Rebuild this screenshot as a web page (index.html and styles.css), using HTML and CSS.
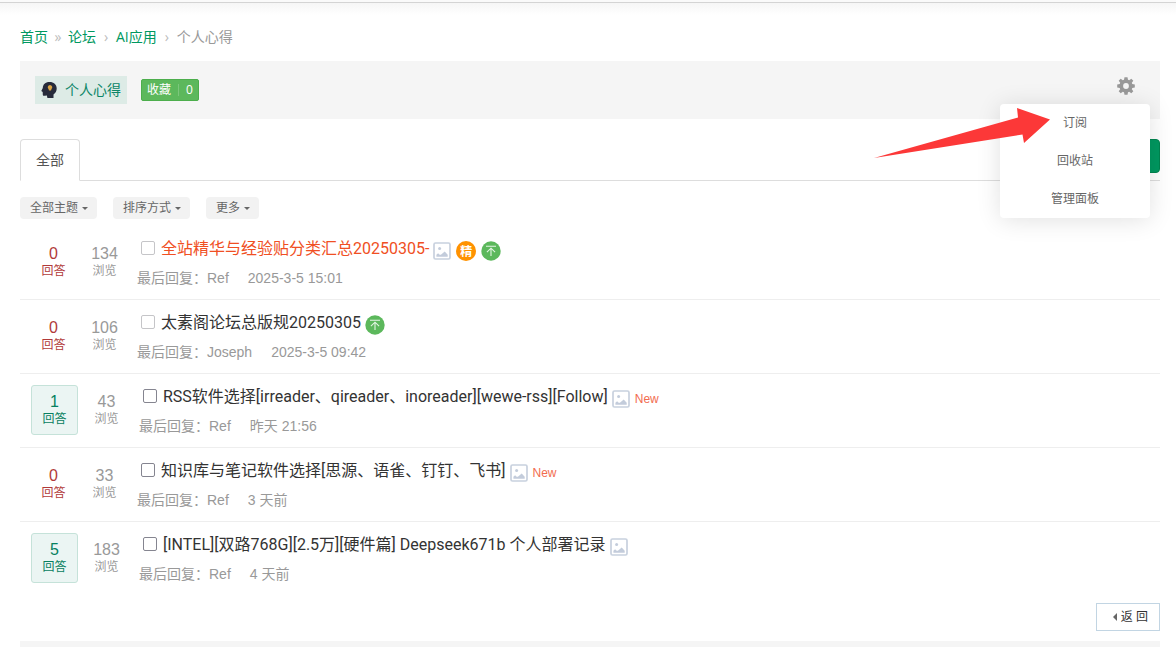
FILE: index.html
```html
<!DOCTYPE html>
<html lang="zh-CN">
<head>
<meta charset="utf-8">
<title>个人心得</title>
<link rel="stylesheet" href="styles.css">
</head>
<body>
<svg class="defs" aria-hidden="true">
  <symbol id="picture" viewBox="0 0 18 18">
    <rect x="1" y="1" width="16" height="16" rx="1.5" fill="none" stroke="#c8d1de" stroke-width="1.7"/>
    <circle cx="6.6" cy="6.6" r="1.5" fill="#c3ccdb"/>
    <path d="M3.4 14.8v-2l1.7-1.6 1.6 1.5h1.2l3.8-3.3 3 3.3v2.1z" fill="#c3ccdb"/>
  </symbol>
  <symbol id="pin" viewBox="0 0 20 20">
    <circle cx="10" cy="10" r="9.7" fill="#5cb85c"/>
    <path d="M5 5.3h10M10 15V7.3M5.9 11.2l4.1-4 4.1 4" fill="none" stroke="#e3f5e3" stroke-width="1.1"/>
  </symbol>
</svg>
<div class="topbar"></div>
<main class="page">
  <nav class="crumbs">
    <a href="#">首页</a><span class="sep">»</span><a href="#">论坛</a><span class="sep">›</span><a href="#">AI应用</a><span class="sep">›</span><span>个人心得</span>
  </nav>

  <header class="forum-head">
    <a class="forum-name" href="#">
      <svg width="16" height="18" viewBox="0 0 16 18" aria-hidden="true">
        <path d="M8.500 1C4.300 1 1.800 3.600 1.800 7L.3 10.100l1.400.8.1 2.800c.1 1 1 1.300 2.100 1.100l2-.2.5 2.400h6.100v-3.500c2-1.400 3.200-3.400 3.200-6C15.700 3.600 12.800 1 8.500 1z" fill="#272b3b"/>
        <path d="M9 4a2.300 2.300 0 0 0-1.500 4l.5 1.500h2l.5-1.500A2.300 2.300 0 0 0 9 4z" fill="#dba545"/>
      </svg>
      <span>个人心得</span>
    </a>
    <button class="favorite" type="button"><span>收藏</span><span class="count">0</span></button>
    <button class="settings" type="button" aria-label="设置">
      <svg width="18" height="18" viewBox="0 0 18 18" aria-hidden="true">
        <path fill="#999" fill-rule="evenodd" d="M7.500.2h3l.5 2.500 1.200.5 2.100-1.500 2 2-1.500 2.100.5 1.200 2.500.5v3l-2.500.5-.5 1.200 1.500 2.100-2 2-2.100-1.500-1.200.5-.5 2.500h-3L7 15.300l-1.200-.5-2.100 1.500-2-2 1.500-2.100L2.700 11l-2.500-.5v-3L2.700 7l.5-1.200-1.500-2.100 2-2 2.100 1.500L7 2.700zM9 6.100a2.900 2.900 0 1 0 0 5.800 2.900 2.900 0 0 0 0-5.800z"/>
      </svg>
    </button>
    <div class="menu">
      <a href="#">订阅</a>
      <a href="#">回收站</a>
      <a href="#">管理面板</a>
    </div>
    <svg class="arrow" width="178" height="52" viewBox="0 0 178 52" aria-hidden="true">
      <path d="M1 50 145 9.500 144 0 177 11.500 151 35 149.500 26.500z" fill="#fc3838"/>
    </svg>
  </header>

  <div class="tabs">
    <a class="tab" href="#">全部</a>
    <button class="post" type="button" aria-label="发帖"></button>
  </div>

  <div class="filters">
    <button type="button">全部主题<i></i></button>
    <button type="button">排序方式<i></i></button>
    <button type="button">更多<i></i></button>
  </div>

  <ul class="threads">
    <li class="thread">
      <div class="stat replies"><b>0</b><span>回答</span></div>
      <div class="stat"><b>134</b><span>浏览</span></div>
      <div class="body">
        <div class="title">
          <input type="checkbox" disabled aria-labelledby="t1">
          <a class="hot" id="t1" href="#">全站精华与经验贴分类汇总20250305-</a>
          <span class="marks"><svg class="pic"><use href="#picture"/></svg><em class="digest">精</em><svg class="top"><use href="#pin"/></svg></span>
        </div>
        <div class="meta"><span>最后回复：<a href="#">Ref</a></span><span>2025-3-5 15:01</span></div>
      </div>
    </li>
    <li class="thread">
      <div class="stat replies"><b>0</b><span>回答</span></div>
      <div class="stat"><b>106</b><span>浏览</span></div>
      <div class="body">
        <div class="title">
          <input type="checkbox" disabled aria-labelledby="t2">
          <a id="t2" href="#">太素阁论坛总版规20250305</a>
          <span class="marks"><svg class="top"><use href="#pin"/></svg></span>
        </div>
        <div class="meta"><span>最后回复：<a href="#">Joseph</a></span><span>2025-3-5 09:42</span></div>
      </div>
    </li>
    <li class="thread">
      <div class="stat replies answered"><b>1</b><span>回答</span></div>
      <div class="stat"><b>43</b><span>浏览</span></div>
      <div class="body">
        <div class="title">
          <input type="checkbox" aria-labelledby="t3">
          <a id="t3" href="#">RSS软件选择[irreader、qireader、inoreader][wewe-rss][Follow]</a>
          <span class="marks"><svg class="pic"><use href="#picture"/></svg><a class="new" href="#">New</a></span>
        </div>
        <div class="meta"><span>最后回复：<a href="#">Ref</a></span><span>昨天 21:56</span></div>
      </div>
    </li>
    <li class="thread">
      <div class="stat replies"><b>0</b><span>回答</span></div>
      <div class="stat"><b>33</b><span>浏览</span></div>
      <div class="body">
        <div class="title">
          <input type="checkbox" aria-labelledby="t4">
          <a id="t4" href="#">知识库与笔记软件选择[思源、语雀、钉钉、飞书]</a>
          <span class="marks"><svg class="pic"><use href="#picture"/></svg><a class="new" href="#">New</a></span>
        </div>
        <div class="meta"><span>最后回复：<a href="#">Ref</a></span><span>3 天前</span></div>
      </div>
    </li>
    <li class="thread">
      <div class="stat replies answered"><b>5</b><span>回答</span></div>
      <div class="stat"><b>183</b><span>浏览</span></div>
      <div class="body">
        <div class="title">
          <input type="checkbox" aria-labelledby="t5">
          <a id="t5" href="#">[INTEL][双路768G][2.5万][硬件篇] Deepseek671b 个人部署记录</a>
          <span class="marks"><svg class="pic"><use href="#picture"/></svg></span>
        </div>
        <div class="meta"><span>最后回复：<a href="#">Ref</a></span><span>4 天前</span></div>
      </div>
    </li>
  </ul>

  <div class="pager"><a class="back" href="#"><i></i>返 回</a></div>
  <div class="footer-band"></div>
</main>
</body>
</html>
```
FILE: styles.css
```css
* { box-sizing: border-box; }
body {
  margin: 0;
  background: #fff;
  color: #666;
  font: 14px/20px "Open Sans", "Noto Sans CJK SC", sans-serif;
}
a { color: inherit; text-decoration: none; }
button { font: inherit; color: inherit; border: 0; padding: 0; cursor: pointer; }
.defs { display: none; }

.topbar {
  height: 15px;
  background: linear-gradient(#fafafa 2px, #d4d4d4 2px, #d4d4d4 3px, #f6f6f6 3px, #fff);
}
.page { padding: 12px 16px 0 20px; }

.crumbs { display: flex; color: #999; }
.crumbs a { color: #009860; }
.sep { width: 20px; text-align: center; color: #bbb; }

.forum-head {
  position: relative;
  display: flex;
  align-items: center;
  height: 58px;
  margin-top: 14px;
  padding: 0 25px 0 15px;
  background: #f5f5f5;
}
.forum-name {
  display: flex;
  align-items: center;
  gap: 8px;
  height: 28px;
  padding: 0 6px;
  background: #ddebe6;
  color: #0c8667;
}
.favorite {
  display: flex;
  align-items: center;
  height: 22px;
  margin-left: 14px;
  padding: 0 5px;
  border: 1px solid #4cae4c;
  border-radius: 2px;
  background: #5cb85c;
  color: #fff;
  font-size: 12px;
  line-height: 12px;
}
.count { margin-left: 7px; padding-left: 7px; border-left: 1px solid #7cc67c; }
.settings { display: flex; margin: 0 0 8px auto; background: none; }
.menu {
  position: absolute;
  z-index: 1;
  top: 43px;
  right: 10px;
  width: 150px;
  border-radius: 4px;
  background: #fff;
  box-shadow: 0 2px 24px rgba(0, 0, 0, 0.12);
  font-size: 12px;
  line-height: 38px;
  text-align: center;
}
.menu a { display: block; }
.arrow { position: absolute; z-index: 2; top: 47px; right: 109px; }

.tabs {
  display: flex;
  justify-content: space-between;
  height: 42px;
  margin-top: 20px;
  border-bottom: 1px solid #ddd;
}
.tab {
  height: 42px;
  width: 60px;
  border: 1px solid #ddd;
  border-bottom-color: #fff;
  border-radius: 4px 4px 0 0;
  color: #555;
  line-height: 40px;
  text-align: center;
}
.post { width: 100px; height: 34px; border: 1px solid #00844f; border-radius: 4px; background: #009860; }

.filters { display: flex; gap: 16px; margin-top: 16px; }
.filters button {
  display: flex;
  align-items: center;
  gap: 4px;
  height: 22px;
  padding: 0 9px 0 10px;
  border-radius: 4px;
  background: #f2f2f2;
  font-size: 12px;
  line-height: 22px;
}
.filters i { border: 3px solid transparent; border-top-color: #666; border-bottom: 0; }

.threads { margin: 7px 0 0; padding: 0; list-style: none; }
.thread {
  display: flex;
  height: 74px;
  padding: 0 0 0 11px;
  border-bottom: 1px solid #eee;
}
.thread:last-child { border-bottom: 0; }
.stat {
  box-sizing: content-box;
  display: flex;
  flex-direction: column;
  width: 45px;
  height: 34px;
  margin: 11px 6px 0 0;
  padding: 8px 0;
  color: #999;
  text-align: center;
  font-size: 12px;
  line-height: 16px;
}
.stat b { font: 16px/18px "Liberation Sans", sans-serif; }
.replies { color: #b13a3a; }
.answered {
  padding: 7px 0;
  border: 1px solid #c5e2d9;
  border-radius: 3px;
  background: #ebf5f3;
  color: #078060;
}
.body { padding: 10px 0 0 4px; }
.title {
  display: flex;
  align-items: center;
  height: 26px;
  color: #333;
  font: 16px/26px Roboto, "Noto Sans CJK SC", sans-serif;
  white-space: nowrap;
}
.hot { color: #f04f23; }
.title input {
  appearance: none;
  width: 14px;
  height: 14px;
  margin: 0 6px 2px 4px;
  border: 1px solid #858590;
  border-radius: 2px;
  background: #fff;
}
.title input:disabled { border-color: #c5c5c8; }
.marks { display: flex; align-items: center; align-self: flex-end; gap: 5px; height: 22px; margin-left: 4px; }
.pic { width: 18px; height: 18px; }
.top { width: 20px; height: 20px; }
.digest {
  width: 20px;
  height: 20px;
  border-radius: 50%;
  background: #ff9200;
  color: #fff;
  font: bold 12px/20px "Noto Sans CJK SC", sans-serif;
  text-align: center;
}
.new { color: #f26c4f; font: 12px/18px "Liberation Sans", sans-serif; }
.meta {
  display: flex;
  gap: 19px;
  margin-top: 6px;
  color: #999;
  font: 14px/20px "Liberation Sans", "Noto Sans CJK SC", sans-serif;
}

.pager { display: flex; justify-content: flex-end; margin-top: 7px; }
.back {
  display: flex;
  align-items: center;
  gap: 4px;
  height: 28px;
  padding: 0 11px 0 16px;
  border: 1px solid #c2d5e3;
  color: #333;
  font: 12px/26px "Liberation Sans", "Noto Sans CJK SC", sans-serif;
}
.back i { border: 4px solid transparent; border-right-color: #666; border-left: 0; }
.footer-band { height: 6px; margin-top: 10px; background: #f5f5f5; }
```
